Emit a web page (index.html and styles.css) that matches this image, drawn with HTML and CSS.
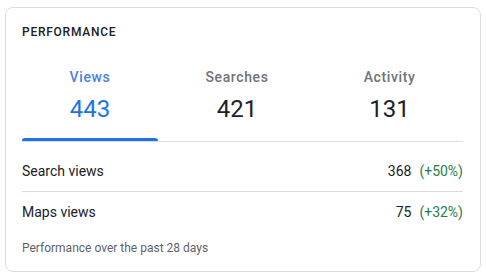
FILE: index.html
```html
<!DOCTYPE html>
<html>
  <head>
    <link rel="stylesheet" href="styles.css">
  </head>
  <body>
    <div class="card">
      <div class="title">PERFORMANCE</div>
      <div class="tabs">
        <div class="tab active">
          <div class="label">Views</div>
          <div class="count">443</div>
        </div>
        <div class="tab">
          <div class="label">Searches</div>
          <div class="count">421</div>
        </div>
        <div class="tab">
          <div class="label">Activity</div>
          <div class="count">131</div>
        </div>
      </div>
      <div class="rows">
        <div class="row">
          <span class="name">Search views</span>
          <span class="value">368<span class="change">(+50%)</span></span>
        </div>
        <div class="row">
          <span class="name">Maps views</span>
          <span class="value">75<span class="change">(+32%)</span></span>
        </div>
      </div>
      <div class="note">Performance over the past 28 days</div>
    </div>
  </body>
</html>
```

FILE: styles.css
```css
body {
  margin: 7px 5px;
  font-family: Roboto, "Liberation Sans", sans-serif;
  color: #202124;
  background: #fff;
}

.card {
  border: 1px solid #dadce0;
  border-radius: 8px;
  padding: 16px 17px 15px 16px;
}

.title {
  font-size: 12px;
  line-height: 16px;
  font-weight: 500;
  letter-spacing: 0.75px;
}

.tabs {
  display: flex;
  margin-top: 27px;
  border-bottom: 1px solid #dadce0;
}

.tab {
  flex: 1 1 auto;
  text-align: center;
  padding-bottom: 16px;
  position: relative;
}

.tab.active::after {
  content: "";
  position: absolute;
  left: 0;
  right: 0;
  bottom: 0;
  height: 3px;
  background: #1a73e8;
  border-radius: 3px 3px 0 0;
}

.label {
  font-size: 14px;
  line-height: 20px;
  font-weight: 500;
  letter-spacing: 0.6px;
  color: #6f7378;
}

.count {
  margin-top: 6px;
  font-size: 24px;
  line-height: 32px;
  color: #202124;
}

.tab.active .label,
.tab.active .count {
  color: #1a73e8;
}

.tab.active .label {
  color: #4a80e6;
}

.rows {
  margin-top: 9px;
}

.row {
  display: flex;
  justify-content: space-between;
  padding: 10px 0;
  font-size: 14px;
  line-height: 20px;
}

.row + .row {
  border-top: 1px solid #dadce0;
}

.change {
  color: #1e7e4a;
  margin-left: 8px;
}

.note {
  margin-top: 8px;
  font-size: 12px;
  line-height: 16px;
  color: #5f6368;
}
```
